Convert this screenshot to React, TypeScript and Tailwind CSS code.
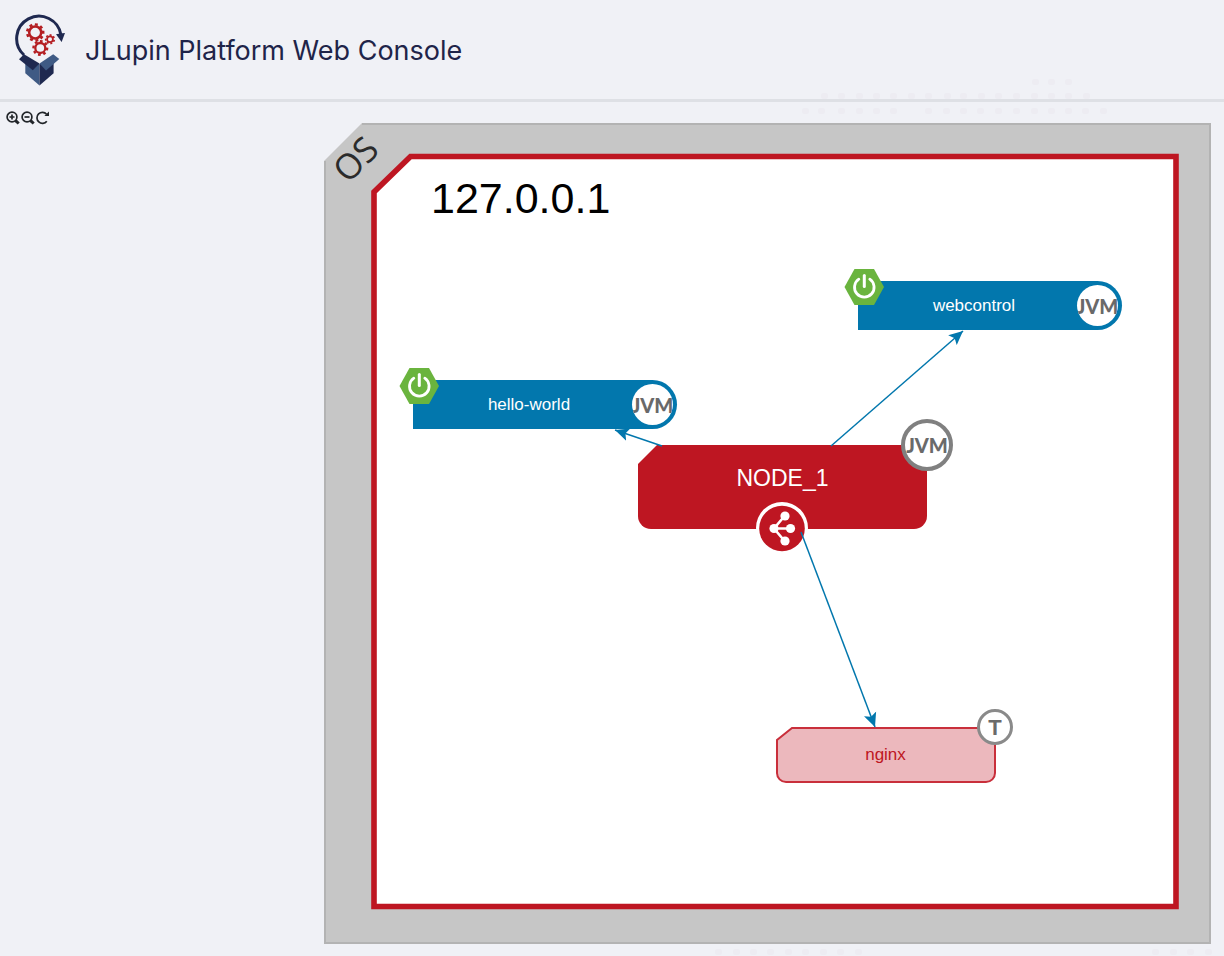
import type { ReactNode } from "react";

const DOT_ROWS = [
  { y: 82, xs: [1035, 1051, 1068] },
  {
    y: 96,
    xs: [824, 841, 859, 876, 893, 911, 928, 947, 963, 981, 998, 1016, 1034, 1051, 1068, 1086],
  },
  {
    y: 111,
    xs: [805, 821, 841, 859, 876, 893, 928, 946, 963, 980, 998, 1016, 1034, 1051, 1068, 1085, 1103],
  },
  { y: 952, xs: [718, 736, 753, 770, 788, 805, 823, 840, 858, 1155, 1173, 1190, 1208] },
];

function DotBackdrop() {
  return (
    <svg className="pointer-events-none absolute top-0 left-0 -z-10" width="1224" height="956" aria-hidden="true">
      {DOT_ROWS.map((row) =>
        row.xs.map((x) => (
          <rect key={`${row.y}-${x}`} x={x - 3} y={row.y - 3} width="7" height="6" rx="2" fill="#edecf2" />
        )),
      )}
    </svg>
  );
}

const GEAR_COLOR = "#b41e22";

function Gear({ cx, cy, r, teeth, width }: { cx: number; cy: number; r: number; teeth: number; width: number }) {
  const angles = Array.from({ length: teeth }, (_, i) => (360 / teeth) * i + 8);
  return (
    <g>
      <circle cx={cx} cy={cy} r={r} fill="none" stroke={GEAR_COLOR} strokeWidth={width} />
      {angles.map((a) => (
        <rect
          key={a}
          x={cx - width * 0.6}
          y={cy - r - width * 1.3}
          width={width * 1.2}
          height={width}
          fill={GEAR_COLOR}
          transform={`rotate(${a} ${cx} ${cy})`}
        />
      ))}
    </g>
  );
}

function Logo() {
  return (
    <svg width="54" height="74" viewBox="13 12 54 74" aria-hidden="true">
      <path d="M24 54 A22.3 22.3 0 1 1 61 34" fill="none" stroke="#1f2950" strokeWidth="3" />
      <path d="M56 33.2 L60 32.6 L65 32 L61.6 41 Z" fill="#1f2950" />
      <Gear cx={35.2} cy={31.5} r={6} teeth={9} width={2.5} />
      <Gear cx={40.3} cy={47} r={5} teeth={8} width={2.3} />
      <Gear cx={50} cy={38.3} r={2.9} teeth={7} width={1.7} />
      <path d="M25.3 61 L39.5 63 V84.5 L25.3 72.3 Z" fill="#3f5a84" />
      <path d="M53.6 61 L39.5 63 V84.5 L53.6 72.3 Z" fill="#1f2950" />
      <path d="M24 53.3 L39.5 62.6 L32.8 69.2 L19 58.2 Z" fill="#1f2950" />
      <path d="M53.2 53.3 L39.5 62.6 L46 69.6 L59.3 58 Z" fill="#3f5a84" />
    </svg>
  );
}

function ToolButton({ label, children }: { label: string; children: ReactNode }) {
  return (
    <button type="button" aria-label={label} title={label} className="block cursor-pointer">
      <svg width="14" height="14" viewBox="0 0 14 14" fill="none" stroke="#212529" strokeWidth="1.7">
        {children}
      </svg>
    </button>
  );
}

function Toolbar() {
  return (
    <div className="flex h-4 shrink-0 items-center gap-px">
      <ToolButton label="Zoom in">
        <circle cx="6" cy="6" r="4.9" />
        <path d="M3.5 6h5M6 3.5v5" />
        <path d="M9.3 9.3l3.4 3.2" strokeWidth="3" />
      </ToolButton>
      <ToolButton label="Zoom out">
        <circle cx="6" cy="6" r="4.9" />
        <path d="M3.5 6h5" />
        <path d="M9.3 9.3l3.4 3.2" strokeWidth="3" />
      </ToolButton>
      <ToolButton label="Refresh">
        <path d="M10.8 10.2A5.5 5.5 0 1 1 10.6 3.2" />
        <path d="M13 .6V5H8.4Z" fill="#212529" stroke="none" />
      </ToolButton>
    </div>
  );
}

function Service({ name, place }: { name: string; place: string }) {
  return (
    <div
      className={`absolute flex h-[49px] w-[264px] items-center justify-center rounded-r-full bg-[#0277ad] pr-8 text-[17px] text-white ${place}`}
    >
      <span>{name}</span>
      <svg className="absolute -top-[13px] -left-[14px]" width="41" height="38" viewBox="0 0 41 38" aria-hidden="true">
        <path d="M10.5 1h19.5L40 19 30 37H10.5L.5 19Z" fill="#6ab43e" />
        <path d="M14.8 11.2A9.8 9.8 0 1 0 25.8 11.2" fill="none" stroke="#fff" strokeWidth="2.8" strokeLinecap="round" />
        <path d="M20.3 7.5v11" stroke="#fff" strokeWidth="3" strokeLinecap="round" />
      </svg>
      <span className="absolute top-1 right-1 flex h-[41px] w-[41px] items-center justify-center overflow-hidden rounded-full bg-white font-['Lato'] text-xl font-black text-[#696969]">
        JVM
      </span>
    </div>
  );
}

function PlatformNode() {
  return (
    <div className="absolute top-[322px] left-[314px] flex h-[84px] w-[289px] justify-center pt-[17px] text-[23px] leading-8 text-white">
      <svg className="absolute inset-0" width="289" height="84" aria-hidden="true">
        <path d="M19 0H289V71a13 13 0 0 1-13 13H13a13 13 0 0 1-13-13V19Z" fill="#be1622" />
      </svg>
      <span className="relative">NODE_1</span>
      <span className="absolute -top-[26px] -right-[26px] flex h-[52px] w-[52px] items-center justify-center rounded-full border-4 border-[#808080] bg-white font-['Lato'] text-xl font-black text-[#6a6a6a]">
        JVM
      </span>
      <svg className="absolute top-[57px] left-[118px]" width="52" height="52" viewBox="0 0 52 52" aria-hidden="true">
        <circle cx="26" cy="26" r="26" fill="#fff" />
        <circle cx="26" cy="26.5" r="22.8" fill="#be1622" />
        <path d="M29 13.5L18 26.5L29 39.5M18 26.5H34" fill="none" stroke="#fff" strokeWidth="2.6" />
        <circle cx="18" cy="26.5" r="4.6" fill="#fff" />
        <circle cx="34.5" cy="26.5" r="4.6" fill="#fff" />
        <circle cx="29" cy="14" r="4.6" fill="#fff" />
        <circle cx="29" cy="39" r="4.6" fill="#fff" />
      </svg>
    </div>
  );
}

function BalancerNode() {
  return (
    <div className="absolute top-[603px] left-[451px] flex h-[58px] w-[221px] items-center justify-center text-[17px] text-[#be1622]">
      <svg className="absolute inset-0" width="221" height="58" aria-hidden="true">
        <path
          d="M17 2H220V47a9 9 0 0 1-9 9H11a9 9 0 0 1-9-9V14Z"
          fill="#ecb8bd"
          stroke="#c92f3b"
          strokeWidth="2"
        />
      </svg>
      <span className="relative">nginx</span>
      <span className="absolute -top-[17px] -right-[17px] flex h-9 w-9 items-center justify-center rounded-full border-[3px] border-[#8a8a8a] bg-white text-[22px] font-bold text-[#6a6a6a]">
        T
      </span>
    </div>
  );
}

function Frame() {
  return (
    <svg className="absolute inset-0" width="887" height="821" aria-hidden="true">
      <path d="M38 0H887V821H0V38Z" fill="#c6c6c6" />
      <path d="M38 1H886V820H1V38" fill="none" stroke="#b3b3b3" strokeWidth="2" />
      <path d="M86.5 33.5H852V783.5H50V69Z" fill="#fff" stroke="#be1622" strokeWidth="5.6" />
    </svg>
  );
}

function Links() {
  return (
    <svg className="pointer-events-none absolute inset-0" width="887" height="821" aria-hidden="true">
      <defs>
        <marker id="head" markerUnits="userSpaceOnUse" markerWidth="15" markerHeight="14" refX="14" refY="7" orient="auto">
          <path d="M14 7L0 .5L3 7L0 13.5Z" fill="#0277ad" />
        </marker>
      </defs>
      <g stroke="#0277ad" strokeWidth="1.5">
        <path d="M507 323L639 208" markerEnd="url(#head)" />
        <path d="M338 323L291 307" markerEnd="url(#head)" />
        <path d="M477 409L551 604" markerEnd="url(#head)" />
      </g>
    </svg>
  );
}

export default function App() {
  return (
    <div className="relative isolate flex min-h-screen flex-col overflow-hidden bg-[#f0f1f6] font-['Liberation_Sans',sans-serif]">
      <DotBackdrop />
      <header className="flex h-[102px] items-center gap-[18px] border-b-[3px] border-[#dee0e5] pl-[13px]">
        <Logo />
        <h1 className="pt-0.5 font-['Inter',sans-serif] text-[27px] leading-9 text-[#1f2449]">
          JLupin Platform Web Console
        </h1>
      </header>
      <main className="flex flex-1 items-start justify-between pt-2 pr-[13px] pl-1.5">
        <Toolbar />
        <section aria-label="Platform topology" className="relative mt-[13px] mb-3 h-[821px] w-[887px] shrink-0">
          <Frame />
          <span className="absolute top-3.5 left-2 -rotate-45 font-['Open_Sans'] text-[35px] leading-[44px] font-medium text-[#2b2b2b]">
            OS
          </span>
          <h2 className="absolute top-[50px] left-[107px] text-[43px] leading-[50px] text-black">127.0.0.1</h2>
          <Service name="webcontrol" place="top-[158px] left-[534px]" />
          <Service name="hello-world" place="top-[257px] left-[89px]" />
          <PlatformNode />
          <BalancerNode />
          <Links />
        </section>
      </main>
    </div>
  );
}
